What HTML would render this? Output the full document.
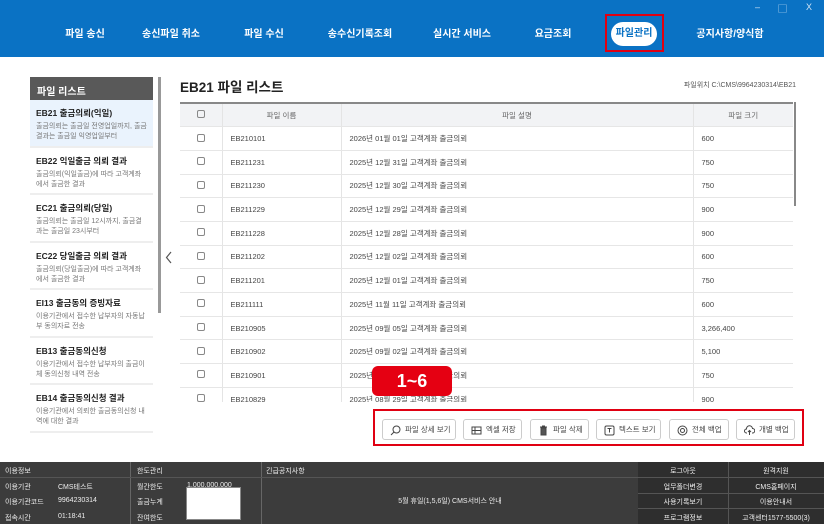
<!DOCTYPE html>
<html><head><meta charset="utf-8"><style>
*{margin:0;padding:0;box-sizing:border-box}
body{width:824px;height:524px;overflow:hidden;background:#fff;font-family:"Liberation Sans","Noto Sans CJK KR",sans-serif;position:relative;color:#333}
.hdr{position:absolute;left:0;top:0;width:824px;height:57px;background:#0a72c4}
.nav{position:absolute;top:25px;color:#fff;font-size:10px;font-weight:bold;transform:translateX(-50%);white-space:nowrap}
.wc{position:absolute;top:2px;color:#cfe3f5;font-size:9px}
.pill{position:absolute;left:611px;top:22px;width:46px;height:24px;background:#fff;border-radius:12px;color:#0a72c4;font-size:10px;font-weight:bold;text-align:center;line-height:24px}
.redbox{position:absolute;border:2px solid #e00012}
.side{position:absolute;left:30px;top:77px;width:123px;height:360px;overflow:hidden}
.sh{height:23px;background:#595959;color:#fff;font-size:10px;font-weight:bold;padding:6px 7px}
.it{height:47.5px;border-bottom:2px solid #eee;padding:7px 6px;background:#fff}
.it b{display:block;font-size:8.5px;color:#222;margin-bottom:3px}
.it span{display:block;font-size:7px;color:#777;line-height:10px}
.it.on{background:#eaf3fd}
table{position:absolute;left:180px;top:102px;width:613px;border-collapse:collapse;font-size:7.5px;color:#444}
td,th{height:23.7px;border-bottom:1px solid #e6e6e6;padding-left:8px;text-align:left;font-weight:normal}
th{background:#f2f3f5;text-align:center;border-top:2px solid #888;color:#666;padding:0}
td+td,th+th{border-left:1px solid #e4e4e4}
.cb{display:inline-block;width:8px;height:8px;border:1px solid #888;border-radius:2px}
td.c{text-align:center;padding:0}
.btn{position:absolute;top:419px;height:21px;border:1px solid #ccc;border-radius:3px;font-size:7.5px;color:#444;line-height:19px;background:#fff;padding-left:22px}
.btn i{position:absolute;left:7px;top:4px;width:11px;height:11px}
.ft{position:absolute;left:0;top:462px;width:824px;height:62px;background:#3c3c3c;color:#eee;font-size:7px}
.ft div{position:absolute}
</style></head><body>
<div class="hdr"></div>
<div class="wc" style="left:755px">–</div><div class="wc" style="left:778px">▢</div><div class="wc" style="left:806px">X</div>
<div class="nav" style="left:85px">파일 송신</div>
<div class="nav" style="left:171px">송신파일 취소</div>
<div class="nav" style="left:264px">파일 수신</div>
<div class="nav" style="left:360px">송수신기록조회</div>
<div class="nav" style="left:462px">실시간 서비스</div>
<div class="nav" style="left:553px">요금조회</div>
<div class="pill">파일관리</div>
<div class="redbox" style="left:605px;top:14px;width:59px;height:38px"></div>
<div class="nav" style="left:730px">공지사항/양식함</div>

<div class="side">
<div class="sh">파일 리스트</div>
<div class="it on"><b>EB21 출금의뢰(익일)</b><span>출금의뢰는 출금일 전영업일까지, 출금결과는 출금일 익영업일부터</span></div>
<div class="it"><b>EB22 익일출금 의뢰 결과</b><span>출금의뢰(익일출금)에 따라 고객계좌에서 출금한 결과</span></div>
<div class="it"><b>EC21 출금의뢰(당일)</b><span>출금의뢰는 출금일 12시까지, 출금결과는 출금일 23시부터</span></div>
<div class="it"><b>EC22 당일출금 의뢰 결과</b><span>출금의뢰(당일출금)에 따라 고객계좌에서 출금한 결과</span></div>
<div class="it"><b>EI13 출금동의 증빙자료</b><span>이용기관에서 접수한 납부자의 자동납부 동의자료 전송</span></div>
<div class="it"><b>EB13 출금동의신청</b><span>이용기관에서 접수한 납부자의 출금이체 동의신청 내역 전송</span></div>
<div class="it"><b>EB14 출금동의신청 결과</b><span>이용기관에서 의뢰한 출금동의신청 내역에 대한 결과</span></div>
</div>
<div style="position:absolute;left:158px;top:77px;width:3px;height:236px;background:#999"></div>
<svg style="position:absolute;left:165px;top:251px" width="8" height="13"><path d="M6 1L1.5 6.5L6 12" fill="none" stroke="#555" stroke-width="1.2"/></svg>

<div style="position:absolute;left:180px;top:76px;font-size:13.5px;font-weight:bold;color:#222">EB21 파일 리스트</div>
<div style="position:absolute;right:28px;top:80px;font-size:7px;color:#555">파일위치 C:\CMS\9964230314\EB21</div>

<div style="position:absolute;left:180px;top:102px;width:613px;height:300px;overflow:hidden">
<table style="left:0;top:0">
<tr><th style="width:42px"><span class="cb"></span></th><th style="width:119px">파일 이름</th><th style="width:352px">파일 설명</th><th>파일 크기</th></tr>
<tr><td class="c"><span class="cb"></span></td><td>EB210101</td><td>2026년 01월 01일 고객계좌 출금의뢰</td><td>600</td></tr>
<tr><td class="c"><span class="cb"></span></td><td>EB211231</td><td>2025년 12월 31일 고객계좌 출금의뢰</td><td>750</td></tr>
<tr><td class="c"><span class="cb"></span></td><td>EB211230</td><td>2025년 12월 30일 고객계좌 출금의뢰</td><td>750</td></tr>
<tr><td class="c"><span class="cb"></span></td><td>EB211229</td><td>2025년 12월 29일 고객계좌 출금의뢰</td><td>900</td></tr>
<tr><td class="c"><span class="cb"></span></td><td>EB211228</td><td>2025년 12월 28일 고객계좌 출금의뢰</td><td>900</td></tr>
<tr><td class="c"><span class="cb"></span></td><td>EB211202</td><td>2025년 12월 02일 고객계좌 출금의뢰</td><td>600</td></tr>
<tr><td class="c"><span class="cb"></span></td><td>EB211201</td><td>2025년 12월 01일 고객계좌 출금의뢰</td><td>750</td></tr>
<tr><td class="c"><span class="cb"></span></td><td>EB211111</td><td>2025년 11월 11일 고객계좌 출금의뢰</td><td>600</td></tr>
<tr><td class="c"><span class="cb"></span></td><td>EB210905</td><td>2025년 09월 05일 고객계좌 출금의뢰</td><td>3,266,400</td></tr>
<tr><td class="c"><span class="cb"></span></td><td>EB210902</td><td>2025년 09월 02일 고객계좌 출금의뢰</td><td>5,100</td></tr>
<tr><td class="c"><span class="cb"></span></td><td>EB210901</td><td>2025년 09월 01일 고객계좌 출금의뢰</td><td>750</td></tr>
<tr><td class="c"><span class="cb"></span></td><td>EB210829</td><td>2025년 08월 29일 고객계좌 출금의뢰</td><td>900</td></tr>
</table></div>
<div style="position:absolute;left:794px;top:102px;width:2px;height:104px;background:#888"></div>

<div style="position:absolute;left:372px;top:366px;width:80px;height:30px;background:#e50012;border-radius:6px;color:#fff;font-size:18px;font-weight:bold;text-align:center;line-height:30px">1~6</div>

<div class="redbox" style="left:373px;top:409px;width:431px;height:37px"></div>
<div class="btn" style="left:382px;width:74px"><i><svg width="11" height="11"><circle cx="6.5" cy="4.5" r="3.5" fill="none" stroke="#444"/><path d="M4 7L1 10" stroke="#444"/></svg></i>파일 상세 보기</div>
<div class="btn" style="left:463px;width:59px"><i><svg width="11" height="11"><rect x="1" y="2" width="9" height="7" fill="none" stroke="#444"/><path d="M4 2v7M1 5.5h9" stroke="#444"/></svg></i>엑셀 저장</div>
<div class="btn" style="left:530px;width:59px"><i><svg width="11" height="11"><path d="M2 2h7M4 1h3M3 3h5v7H3z" fill="#555" stroke="#444"/></svg></i>파일 삭제</div>
<div class="btn" style="left:596px;width:65px"><i><svg width="11" height="11"><rect x="1" y="1" width="9" height="9" rx="1.5" fill="none" stroke="#444"/><path d="M3.5 3.5h4M5.5 3.5v4" stroke="#444"/></svg></i>텍스트 보기</div>
<div class="btn" style="left:669px;width:60px"><i><svg width="11" height="11"><circle cx="5.5" cy="5.5" r="4.5" fill="none" stroke="#444"/><circle cx="5.5" cy="5.5" r="2" fill="none" stroke="#444"/></svg></i>전체 백업</div>
<div class="btn" style="left:736px;width:59px"><i><svg width="11" height="11"><path d="M3 8H2.5a2 2 0 0 1 0-4A3 3 0 0 1 8.5 3.5a2.2 2.2 0 0 1 0 4.5H8M5.5 10V5.5M4 7l1.5-1.5L7 7" fill="none" stroke="#444"/></svg></i>개별 백업</div>

<div class="ft">
<div style="left:130px;top:0;width:1px;height:62px;background:#666"></div>
<div style="left:261px;top:0;width:1px;height:62px;background:#666"></div>
<div style="left:638px;top:0;width:186px;height:62px;background:#2e2e2e"></div>
<div style="left:728px;top:0;width:1px;height:62px;background:#555"></div>
<div style="left:0;top:15px;width:824px;height:1px;background:#555"></div>
<div style="left:638px;top:31px;width:186px;height:1px;background:#555"></div>
<div style="left:638px;top:46px;width:186px;height:1px;background:#555"></div>
<div style="left:5px;top:4px">이용정보</div><div style="left:137px;top:4px">한도관리</div><div style="left:266px;top:4px">긴급공지사항</div>
<div style="left:5px;top:20px">이용기관</div><div style="left:58px;top:20px">CMS테스트</div>
<div style="left:5px;top:35px">이용기관코드</div><div style="left:58px;top:35px">9964230314</div>
<div style="left:5px;top:51px">접속시간</div><div style="left:58px;top:51px">01:18:41</div>
<div style="left:137px;top:20px">월간한도</div><div style="left:187px;top:20px">1,000,000,000</div>
<div style="left:137px;top:35px">출금누계</div><div style="left:137px;top:51px">잔여한도</div>
<div style="left:186px;top:25px;width:55px;height:33px;background:#fff;border:1px solid #888"></div>
<div style="left:262px;top:34px;width:376px;text-align:center">5월 휴일(1,5,6일) CMS서비스 안내</div>
<div style="left:638px;top:4px;width:90px;text-align:center">로그아웃</div><div style="left:728px;top:4px;width:96px;text-align:center">원격지원</div>
<div style="left:638px;top:20px;width:90px;text-align:center">업무폴더변경</div><div style="left:728px;top:20px;width:96px;text-align:center">CMS홈페이지</div>
<div style="left:638px;top:35px;width:90px;text-align:center">사용기록보기</div><div style="left:728px;top:35px;width:96px;text-align:center">이용안내서</div>
<div style="left:638px;top:51px;width:90px;text-align:center">프로그램정보</div><div style="left:728px;top:51px;width:96px;text-align:center">고객센터1577-5500(3)</div>
</div>
</body></html>
